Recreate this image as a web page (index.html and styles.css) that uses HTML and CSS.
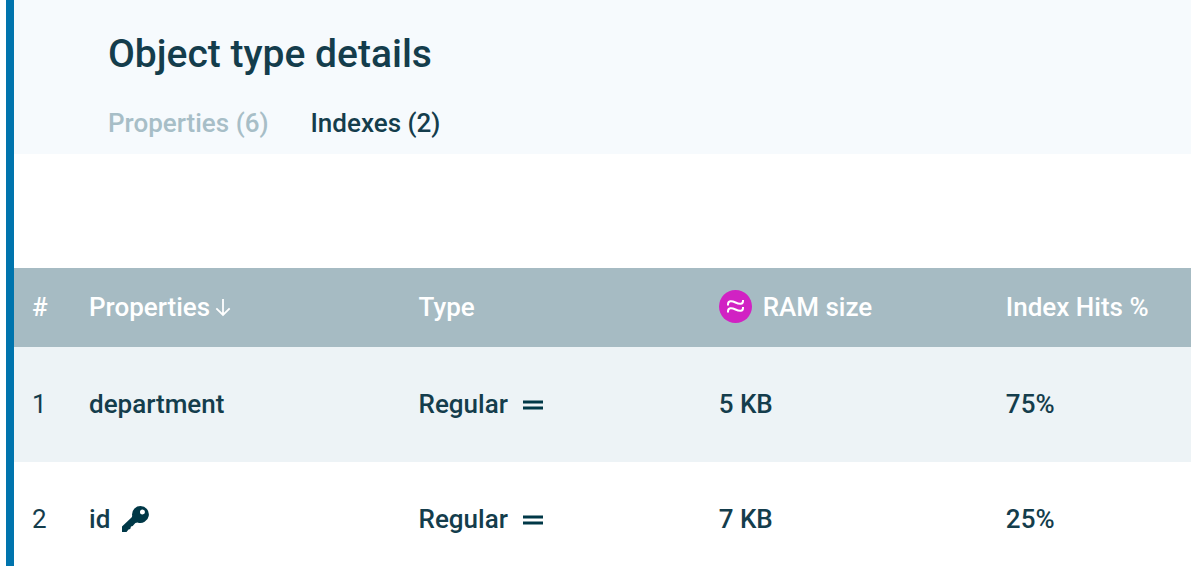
FILE: index.html
```html
<!DOCTYPE html>
<html lang="en">
<head>
<meta charset="utf-8">
<title>Object type details</title>
<link rel="stylesheet" href="styles.css">
</head>
<body>
<main class="panel">
  <header class="panel-header">
    <h1 class="title">Object type details</h1>
    <nav class="tabs">
      <a class="tab" href="#properties">Properties (6)</a>
      <a class="tab tab-active" href="#indexes" aria-current="page">Indexes (2)</a>
    </nav>
  </header>
  <table class="indexes">
    <colgroup>
      <col class="col-number">
      <col class="col-properties">
      <col class="col-type">
      <col class="col-ram">
      <col class="col-hits">
    </colgroup>
    <thead>
      <tr>
        <th scope="col">#</th>
        <th scope="col" aria-sort="descending"><button class="sort" type="button">Properties<svg class="arrow" viewBox="0 0 18 20" aria-hidden="true"><path d="M9 1V19M1.500 11.500L9 19L16.500 11.500"/></svg></button></th>
        <th scope="col">Type</th>
        <th scope="col"><span class="with-badge"><svg class="badge" viewBox="0 0 33 33" aria-hidden="true"><circle cx="16.500" cy="16.500" r="16.500"/><path d="M9 15.500V14.500C9 10.500 12.500 10.500 16.500 12.500S24 14.500 24 11V10M9 22.500V21.500C9 17.500 12.500 17.500 16.500 19.500S24 21.500 24 18V17"/></svg>RAM size</span></th>
        <th scope="col">Index Hits %</th>
      </tr>
    </thead>
    <tbody>
      <tr>
        <td class="number">1</td>
        <td>department</td>
        <td><span class="with-equals">Regular<svg class="equals" viewBox="0 0 20 14" aria-hidden="true"><path d="M0 5H20M0 11H20"/></svg></span></td>
        <td>5 KB</td>
        <td>75%</td>
      </tr>
      <tr>
        <td class="number">2</td>
        <td><span class="with-key">id<svg class="key" viewBox="0 0 27 27" role="img" aria-label="Key"><path fill-rule="evenodd" d="M18.500 1A8.500 8.500 0 1 1 15.500 17.500Q13 17.500 12 19.500Q11 21.500 9 21.500Q9 24 6.500 24.500L4.500 27H0V21.500L9.500 12.500Q10.500 11.500 10 9.500A8.500 8.500 0 0 1 18.500 1ZM20.500 4.500A2.500 2.500 0 1 0 20.500 9.500A2.500 2.500 0 0 0 20.500 4.500Z"/></svg></span></td>
        <td><span class="with-equals">Regular<svg class="equals" viewBox="0 0 20 14" aria-hidden="true"><path d="M0 5H20M0 11H20"/></svg></span></td>
        <td>7 KB</td>
        <td>25%</td>
      </tr>
    </tbody>
  </table>
</main>
</body>
</html>
```
FILE: styles.css
```css
* {
  box-sizing: border-box;
}

body {
  margin: 0;
  padding-left: 6px;
  background: #fff;
  color: #143d4c;
  font: 500 26px/32px Roboto, sans-serif;
}

.panel {
  height: 100vh;
  overflow: hidden;
  border-left: 8px solid #0074ad;
}

.panel-header {
  padding: 30px 94px 15px;
  background: #f6fafd;
}

.title {
  margin: 0 0 29px;
  font-size: 39px;
  font-weight: 500;
  line-height: 48px;
}

.tabs {
  display: flex;
  gap: 42px;
}

.tab {
  color: #a7bec7;
  text-decoration: none;
}

.tab-active {
  color: #143d4c;
}

.indexes {
  width: 100%;
  margin-top: 114px;
  border-collapse: collapse;
  table-layout: fixed;
}

.col-number { width: 57px; }
.col-properties { width: 28%; }
.col-type { width: 25.5%; }
.col-ram { width: 24.4%; }

.indexes th,
.indexes td {
  padding: 0 0 2px 18px;
  text-align: left;
  font-weight: 500;
  white-space: nowrap;
}

.indexes th {
  height: 79px;
  background: #a6bbc3;
  color: #fff;
}

.indexes td {
  height: 115px;
}

.indexes tbody tr:nth-child(odd) {
  background: #edf3f6;
}

.indexes .number {
  font-weight: 400;
}

.sort,
.with-badge,
.with-equals,
.with-key {
  display: flex;
  align-items: center;
}

.sort {
  gap: 5px;
  padding: 0;
  border: 0;
  background: none;
  color: inherit;
  font: inherit;
  cursor: pointer;
}

.arrow {
  width: 16px;
  height: 20px;
  fill: none;
  stroke: currentColor;
  stroke-width: 2;
}

.with-badge {
  gap: 11px;
}

.badge {
  width: 33px;
  height: 33px;
  fill: #d122c3;
}

.badge path {
  fill: none;
  stroke: #fff;
  stroke-width: 2;
}

.with-equals {
  gap: 15px;
}

.equals {
  width: 20px;
  height: 14px;
  fill: none;
  stroke: #003847;
  stroke-width: 3;
}

.with-key {
  gap: 12px;
}

.key {
  width: 27px;
  height: 27px;
  fill: #003847;
}
```
